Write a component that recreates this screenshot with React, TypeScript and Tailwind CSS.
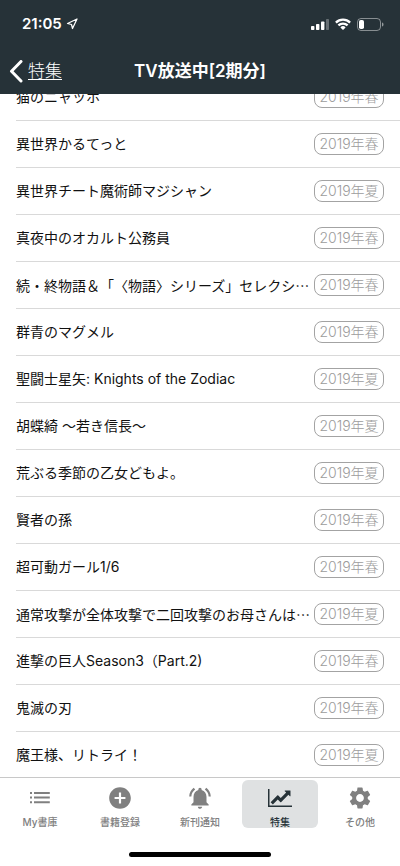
import { Navigation } from 'lucide-react'
import { MdAddCircle, MdNotificationsActive, MdSettings } from 'react-icons/md'
import clsx from 'clsx'

interface Anime {
  title: string
  season: string
  truncated?: boolean
}

const animes: Anime[] = [
  { title: '猫のニャッホ', season: '2019年春' },
  { title: '異世界かるてっと', season: '2019年春' },
  { title: '異世界チート魔術師マジシャン', season: '2019年夏' },
  { title: '真夜中のオカルト公務員', season: '2019年春' },
  { title: '続・終物語＆「〈物語〉シリーズ」セレクシ', season: '2019年春', truncated: true },
  { title: '群青のマグメル', season: '2019年春' },
  { title: '聖闘士星矢: Knights of the Zodiac', season: '2019年夏' },
  { title: '胡蝶綺 〜若き信長〜', season: '2019年夏' },
  { title: '荒ぶる季節の乙女どもよ。', season: '2019年夏' },
  { title: '賢者の孫', season: '2019年春' },
  { title: '超可動ガール1/6', season: '2019年春' },
  { title: '通常攻撃が全体攻撃で二回攻撃のお母さんは', season: '2019年夏', truncated: true },
  { title: '進撃の巨人Season3（Part.2)', season: '2019年春' },
  { title: '鬼滅の刃', season: '2019年春' },
  { title: '魔王様、リトライ！', season: '2019年夏' },
]

function SignalIcon() {
  return (
    <svg className="h-3 w-[18px]" viewBox="0 0 18 12" fill="currentColor">
      <rect x="0" y="8" width="3.4" height="4" rx="0.8" />
      <rect x="5" y="6" width="3.4" height="6" rx="0.8" />
      <rect x="10" y="3.5" width="3.4" height="8.5" rx="0.8" />
      <rect x="15" y="1" width="3" height="11" rx="0.8" opacity="0.3" />
    </svg>
  )
}

function WifiIcon() {
  return (
    <svg className="h-3 w-4" viewBox="0 0 16 12" fill="none" stroke="currentColor" strokeWidth="2.3">
      <path d="M0.9 4.6a10.2 10.2 0 0 1 14.2 0" />
      <path d="M3.4 7.4a6.6 6.6 0 0 1 9.2 0" />
      <path d="M8 12 5.4 9.4a3.7 3.7 0 0 1 5.2 0z" fill="currentColor" stroke="none" />
    </svg>
  )
}

function BatteryIcon() {
  return (
    <svg className="h-[13px] w-[27px]" viewBox="0 0 27 13" fill="none">
      <rect x="0.5" y="0.5" width="23" height="12" rx="3.5" stroke="white" opacity="0.45" />
      <rect x="2" y="2" width="5" height="9" rx="1.8" fill="white" />
      <path d="M25 4.5v4c1-.4 1.5-1.1 1.5-2s-.5-1.6-1.5-2z" fill="white" opacity="0.5" />
    </svg>
  )
}

function ListIcon() {
  return (
    <svg className="h-6 w-6" viewBox="0 0 24 24" fill="currentColor">
      <path d="M2 6h2v2H2zM2 10.6h2v2H2zM2 15.2h2v2H2zM6 6h15.8v2H6zM6 10.6h15.8v2H6zM6 15.2h15.8v2H6z" />
    </svg>
  )
}

function ChartIcon() {
  return (
    <svg className="h-[18px] w-6" viewBox="0 0 2048 1536" fill="currentColor">
      <path d="M2048 1408v128h-2048v-1536h128v1408h1920zm-128-1248v435q0 21-19.5 29.5t-35.5-7.5l-121-121-633 633q-10 10-23 10t-23-10l-233-233-416 416-192-192 585-585q10-10 23-10t23 10l233 233 464-464-121-121q-16-16-7.5-35.5t29.5-19.5h435q14 0 23 9t9 23z" />
    </svg>
  )
}

const tabs = [
  { label: 'My書庫', icon: <ListIcon />, active: false },
  { label: '書籍登録', icon: <MdAddCircle className="h-[26px] w-[26px]" />, active: false },
  { label: '新刊通知', icon: <MdNotificationsActive className="h-[26px] w-[26px]" />, active: false },
  { label: '特集', icon: <ChartIcon />, active: true },
  { label: 'その他', icon: <MdSettings className="h-[26px] w-[26px]" />, active: false },
]

export default function App() {
  return (
    <div
      lang="ja"
      className="flex h-screen flex-col bg-white font-['Inter','Noto_Sans_CJK_JP',sans-serif] [text-spacing-trim:space-all]"
    >
      {/* Header */}
      <header className="shrink-0 bg-[#263238] text-white">
        <div className="flex h-12 items-center justify-between pr-4 pl-[22px]">
          <div className="flex items-center gap-1">
            <span className="text-[15px] font-semibold">21:05</span>
            <Navigation className="h-3 w-3" strokeWidth={2.5} />
          </div>
          <div className="flex items-center gap-[6px]">
            <SignalIcon />
            <WifiIcon />
            <BatteryIcon />
          </div>
        </div>
        <div className="grid h-[46px] grid-cols-[1fr_auto_1fr] items-center px-2 pt-0.5">
          <a href="#" className="flex items-center gap-1 text-[17px] font-light">
            <svg
              className="h-6 w-4"
              viewBox="0 0 16 24"
              fill="none"
              stroke="currentColor"
              strokeWidth="3"
              strokeLinecap="round"
              strokeLinejoin="round"
            >
              <path d="M13 1.5 3.5 11.2 13 21" />
            </svg>
            <span className="underline underline-offset-2">特集</span>
          </a>
          <h1 className="text-[17px] font-semibold">TV放送中[2期分]</h1>
        </div>
      </header>

      {/* Title list, scrolled to the end */}
      <main className="flex min-h-0 flex-1 flex-col justify-end overflow-hidden">
        <ul className="-mb-0.5 pl-4">
          {animes.map((anime) => (
            <li
              key={anime.title}
              className="flex h-[47px] items-center justify-between gap-1 border-b border-[#d9d9d9] pr-4"
            >
              <span className="min-w-0 overflow-hidden text-sm whitespace-nowrap text-[#111111]">
                {anime.title}
                {anime.truncated && <span className="font-['Noto_Sans_CJK_JP',sans-serif]">…</span>}
              </span>
              <span className="flex h-[22px] w-[70px] shrink-0 items-center justify-center rounded-lg border border-[#a3a3a3] text-sm font-light text-[#9c9c9c]">
                {anime.season}
              </span>
            </li>
          ))}
        </ul>
      </main>

      {/* Tab bar */}
      <nav className="flex h-[51px] shrink-0 border-t border-[#c8c8c8]">
        {tabs.map((tab) => (
          <button
            key={tab.label}
            className={clsx(
              'mx-0.5 mt-0.5 flex h-12 flex-1 flex-col items-center overflow-hidden rounded-md',
              tab.active ? 'bg-[#dfe1e2] text-[#263238]' : 'text-[#808080]'
            )}
          >
            <span className="flex h-9 shrink-0 items-center justify-center">{tab.icon}</span>
            <span className="text-[10px] leading-3 font-medium">{tab.label}</span>
          </button>
        ))}
      </nav>

      {/* Home indicator */}
      <div className="flex h-[38px] shrink-0 justify-center pt-6">
        <div className="h-[5px] w-[142px] rounded-full bg-black" />
      </div>
    </div>
  )
}
